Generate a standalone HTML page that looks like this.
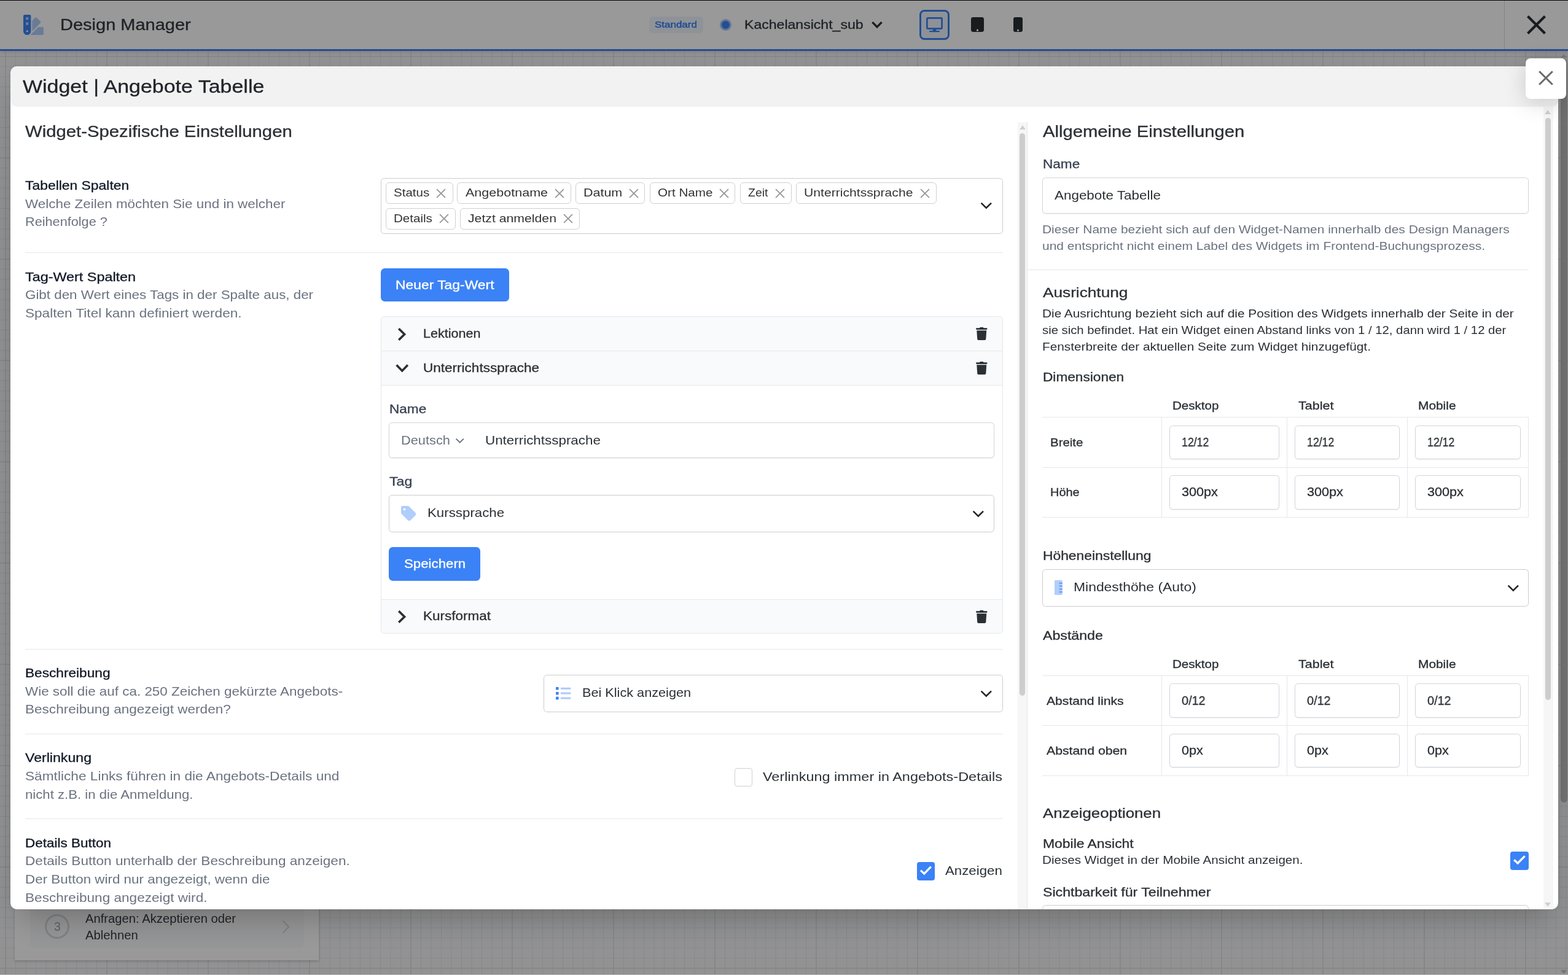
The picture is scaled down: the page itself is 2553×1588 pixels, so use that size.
<!DOCTYPE html>
<html lang="de">
<head>
<meta charset="utf-8">
<title>Design Manager – Widget | Angebote Tabelle</title>
<style>
*{box-sizing:border-box;margin:0;padding:0}
html,body{width:2553px;height:1588px;overflow:hidden}
.t,h1,h2,h3,h4{will-change:transform}
body{position:relative;font-family:"Liberation Sans",Arial,sans-serif;font-weight:400;color:#212529;
 background-color:#f3f4f6;
 background-image:
  linear-gradient(to right,#d6d7d9 0,#d6d7d9 1.3px,transparent 1.3px),
  linear-gradient(to bottom,#d6d7d9 0,#d6d7d9 1.3px,transparent 1.3px),
  linear-gradient(to right,#e3e4e6 0,#e3e4e6 1.3px,transparent 1.3px),
  linear-gradient(to bottom,#e3e4e6 0,#e3e4e6 1.3px,transparent 1.3px);
 background-size:165px 165px,165px 165px,16.5px 16.5px,16.5px 16.5px;
 background-position:8.5px 91.6px,8.5px 91.6px,8.5px 91.6px,8.5px 91.6px}
.t{position:absolute;white-space:nowrap;line-height:1;transform-origin:0 50%;font-weight:400;display:block}
.t.m{-webkit-text-stroke:.32px currentColor}
.t.b{font-weight:700}
.t.sb{-webkit-text-stroke:.5px currentColor}
.ic{position:absolute;display:block;overflow:visible}
div,section,header,i{display:block}
header.topbar{position:absolute;left:0;top:0;width:2553px;height:83px;background:#fff;border-top:1px solid #000;border-bottom:3px solid #3b82f6;box-shadow:0 2px 7px rgba(0,0,0,.13)}
header.topbar>*{margin-top:-1px}
header.topbar>div{position:absolute}
.badge{background:#eff6fd;border-radius:5px}
.dot{border-radius:50%;background:#3b82f6;border:3px solid #a9c6f5}
.devbtn{border:3px solid #3b82f6;border-radius:8px;background:#edf4fc}
.vdiv{background:#d7dde5}
.stepcard{position:absolute;left:24px;top:1380px;width:495px;height:184px;background:#fff;box-shadow:0 2px 4px rgba(0,0,0,.18)}
.stepcard>*{margin-left:-24px;margin-top:-1380px}
.stepcard>div{position:absolute}
.stepinner{background:#f9fafb;border-radius:8px}
.stepnum{border:3px solid #d5d9de;border-radius:50%}
.pgscroll{position:absolute}
.pgscroll i{position:absolute;left:4px;width:10.600px}
.pgscroll .thumb{top:13px;height:1211px;border-radius:6px;background:#c1c1c1}
.pgscroll .up{top:5px;left:4px;width:0;height:0;border:5px solid transparent;border-top:0;border-bottom:6px solid #c8c8c8}
.pgscroll .down{bottom:2px;left:3.500px;width:0;height:0;border:5px solid transparent;border-bottom:0;border-top:6px solid #c1c1c1}
.overlay{position:absolute;left:0;top:1px;width:2553px;height:1587px;background:rgba(0,0,0,.4)}
.modal{position:absolute;left:17px;top:108px;width:2520px;height:1373px;background:#fff;border-radius:10.500px;box-shadow:0 25px 50px -12px rgba(0,0,0,.25),0 0 9px rgba(0,0,0,.07)}
.modal>.clip{position:absolute;left:0;top:0;width:2520px;height:1373px;border-radius:10.500px;overflow:hidden}
.modal header{position:absolute;left:0;top:0;width:2520px;height:65.500px;background:#f2f2f2;border-radius:10.500px}
.modal section{position:absolute;left:0;top:0;width:0;height:0}
.modal section>div{position:absolute}
.field{border:1px solid #d1d5db;border-radius:5.500px;background:#fff}
.field.sh{box-shadow:0 1px 2px rgba(0,0,0,.06)}
.chip{border:1px solid #d0d0d0;border-radius:6px;background:#fff}
.field.ms{border-color:#ccc}
.hr{background:#e5e7eb}
.btn{background:#3b82f6;border-radius:6.500px}
.acc{border:1px solid #e5e7eb;border-radius:5.500px;background:#fff}
.acch{background:#f9fafb}
.cb{border:1px solid #d0d0d0;border-radius:4px;background:#fff}
.cb.on{border:0;background:#3b82f6}
.cb svg{display:block;width:100%;height:100%}
.sbtrack{background:#f6f6f6}
.sbtrack i{position:absolute;left:3px;width:9px}
.sbtrack .thumb{border-radius:5px;background:#cdcdcd}
.sbtrack .up{top:5px;left:2.500px;width:0;height:0;border:5px solid transparent;border-top:0;border-bottom:7px solid #cfcfcf}
.sbtrack .down{bottom:4px;left:2.500px;width:0;height:0;border:5px solid transparent;border-bottom:0;border-top:7px solid #cfcfcf}
.closebtn{position:absolute;left:2484px;top:95px;width:66px;height:66px;background:#fff;border-radius:8px;box-shadow:0 6px 36px rgba(0,0,0,.17)}
.closebtn svg{position:absolute;left:20px;top:18.500px;width:26px;height:26px}
.edge{position:absolute;left:0;top:1586.600px;width:2553px;height:2px;background:#b4b4b4}
</style>
</head>
<body>
<header class="topbar">
<svg class="ic" style="left:38.0px;top:24.0px;width:33.0px;height:33.0px" viewBox="0 0 512 512" aria-hidden="true"><path fill="#3b82f6" fill-rule="evenodd" d="M0 32C0 14 14 0 32 0H160c18 0 32 14 32 32V416c0 53-43 96-96 96S0 469 0 416ZM64 64v64h64V64ZM64 192v64h64V192ZM96 440a24 24 0 1 0 0-48a24 24 0 1 0 0 48Z"/><path fill="#3b82f6" opacity=".4" d="M64 64h64v64H64ZM64 192h64v64H64Z"/><path fill="#3b82f6" opacity=".4" d="M224 148L296 76c12-12 32-12 45 0l90 90c12 12 12 32 0 45L224 418Z"/><path fill="#3b82f6" opacity=".4" d="M176 512L378 310H480c18 0 32 14 32 32V480c0 18-14 32-32 32Z"/></svg>
<h1 class="t m" style="left:98px;top:28px;font-size:25.15px;transform:scaleX(1.1533);color:#343a40">Design Manager</h1>
<div class="badge" style="left:1057.0px;top:27.0px;width:88.0px;height:27.0px"></div>
<span class="t m sb" style="left:1066px;top:32px;font-size:15.05px;transform:scaleX(1.1276);color:#3b82f6">Standard</span>
<div class="dot" style="left:1172.0px;top:30.8px;width:19.0px;height:19.0px"></div>
<span class="t m" style="left:1212px;top:30px;font-size:20.05px;transform:scaleX(1.1514);color:#343a40">Kachelansicht_sub</span>
<svg class="ic" style="left:1417.6px;top:32.3px;width:20.0px;height:16.0px" viewBox="0 0 20 16" aria-hidden="true"><path d="M2.4 4.2L10 11.800L17.6 4.2" fill="none" stroke="#2b3035" stroke-width="3.3"/></svg>
<div class="devbtn" role="button" style="left:1497.3px;top:16.4px;width:48.3px;height:48.4px"></div>
<svg class="ic" style="left:1508.0px;top:28.0px;width:27.0px;height:24.2px" viewBox="0 0 27 24.2" aria-hidden="true"><path fill="#3b82f6" fill-rule="evenodd" d="M3 0H24a3 3 0 0 1 3 3V17a3 3 0 0 1-3 3H3a3 3 0 0 1-3-3V3a3 3 0 0 1 3-3ZM2.7 2.7V17.3H24.3V2.7Z"/><path fill="#3b82f6" d="M11.6 19.5h3.800l1.400 2.500H21a1.100 1.100 0 0 1 0 2.200H6a1.100 1.100 0 0 1 0-2.200h4.200Z"/></svg>
<svg class="ic" style="left:1581.0px;top:28.0px;width:21.0px;height:24.0px" viewBox="0 0 21 24" aria-hidden="true"><path fill="#2b3035" fill-rule="evenodd" d="M3.4 0H17.6a3.4 3.4 0 0 1 3.4 3.4V20.6a3.4 3.4 0 0 1-3.4 3.4H3.4a3.4 3.4 0 0 1-3.400-3.400V3.4a3.4 3.4 0 0 1 3.400-3.400ZM10.5 23a1.700 1.700 0 1 0 0-3.400a1.700 1.700 0 1 0 0 3.400Z"/></svg>
<svg class="ic" style="left:1650.0px;top:28.0px;width:15.0px;height:24.0px" viewBox="0 0 15 24" aria-hidden="true"><path fill="#2b3035" fill-rule="evenodd" d="M3.2 0H11.8a3.200 3.200 0 0 1 3.200 3.200V20.8a3.200 3.200 0 0 1-3.200 3.200H3.2a3.200 3.200 0 0 1-3.200-3.200V3.2a3.200 3.200 0 0 1 3.200-3.200ZM7.5 23a1.600 1.600 0 1 0 0-3.200a1.600 1.600 0 1 0 0 3.200Z"/></svg>
<div class="vdiv" style="left:2449.0px;top:1.0px;width:1.0px;height:79.0px"></div>
<svg class="ic" style="left:2483.7px;top:23.4px;width:35.0px;height:35.0px" viewBox="0 0 35 35" aria-hidden="true"><path d="M3.5 3.5L31.5 31.5M31.5 3.5L3.5 31.5" fill="none" stroke="#2b3035" stroke-width="4.2"/></svg>
</header>
<section class="stepcard">
<div class="stepinner" style="left:49.0px;top:1400.0px;width:446.0px;height:144.4px"></div>
<div class="stepnum" style="left:73.4px;top:1488.8px;width:40.0px;height:40.0px"></div>
<span class="t" style="left:88px;top:1500px;font-size:19.5px;transform:scaleX(0.9979);color:#9ca3af">3</span>
<span class="t" style="left:139px;top:1487px;font-size:19.3px;transform:scaleX(1.0487);color:#343a40">Anfragen: Akzeptieren oder</span>
<span class="t" style="left:139px;top:1514px;font-size:19.3px;transform:scaleX(1.0522);color:#343a40">Ablehnen</span>
<svg class="ic" style="left:458.0px;top:1497.5px;width:14.0px;height:23.0px" viewBox="0 0 14 23" aria-hidden="true"><path d="M2.5 1.5L12 11.500L2.5 21.500" fill="none" stroke="#cbd0d6" stroke-width="1.7"/></svg>
</section>
<div class="pgscroll" role="scrollbar" style="left:2537.0px;top:83.0px;width:16.0px;height:1505.0px"><i class="up"></i><i class="thumb"></i><i class="down"></i></div>
<div class="overlay"></div>
<div class="modal" role="dialog" aria-label="Widget | Angebote Tabelle"><div class="clip">
<header><h2 class="t m" style="left:20px;top:18px;font-size:29.85px;transform:scaleX(1.1379);color:#212529">Widget | Angebote Tabelle</h2></header>
<section class="leftpane">
<h3 class="t m" style="left:24px;top:94px;font-size:25.85px;transform:scaleX(1.1334);color:#2b3035">Widget-Spezifische Einstellungen</h3>
<span class="t m" style="left:24px;top:184px;font-size:20.05px;transform:scaleX(1.1425);color:#111827">Tabellen Spalten</span>
<span class="t" style="left:24px;top:214px;font-size:20.6px;transform:scaleX(1.0889);color:#6b7280">Welche Zeilen möchten Sie und in welcher</span>
<span class="t" style="left:24px;top:243px;font-size:20.6px;transform:scaleX(1.0527);color:#6b7280">Reihenfolge ?</span>
<div class="field ms" role="combobox" style="left:603.0px;top:182.0px;width:1013.0px;height:91.0px"></div>
<div class="chip" role="option" style="left:611.3px;top:189.0px;width:109.3px;height:35.0px"></div><span class="t" style="left:624px;top:196px;font-size:19.2px;transform:scaleX(1.0711);color:#333">Status</span><svg class="ic" style="left:693.0px;top:198.5px;width:16.0px;height:16.0px" viewBox="0 0 16 16" aria-hidden="true"><path d="M1.6 1.6L14.4 14.4M14.4 1.6L1.6 14.4" fill="none" stroke="#999" stroke-width="1.9" stroke-linecap="round"/></svg>
<div class="chip" role="option" style="left:727.2px;top:189.0px;width:185.4px;height:35.0px"></div><span class="t" style="left:741px;top:196px;font-size:19.2px;transform:scaleX(1.1220);color:#333">Angebotname</span><svg class="ic" style="left:885.8px;top:198.5px;width:16.0px;height:16.0px" viewBox="0 0 16 16" aria-hidden="true"><path d="M1.6 1.6L14.4 14.4M14.4 1.6L1.6 14.4" fill="none" stroke="#999" stroke-width="1.9" stroke-linecap="round"/></svg>
<div class="chip" role="option" style="left:920.3px;top:189.0px;width:113.2px;height:35.0px"></div><span class="t" style="left:933px;top:196px;font-size:19.2px;transform:scaleX(1.1195);color:#333">Datum</span><svg class="ic" style="left:1007.0px;top:198.5px;width:16.0px;height:16.0px" viewBox="0 0 16 16" aria-hidden="true"><path d="M1.6 1.6L14.4 14.4M14.4 1.6L1.6 14.4" fill="none" stroke="#999" stroke-width="1.9" stroke-linecap="round"/></svg>
<div class="chip" role="option" style="left:1041.2px;top:189.0px;width:139.2px;height:35.0px"></div><span class="t" style="left:1054px;top:196px;font-size:19.2px;transform:scaleX(1.0753);color:#333">Ort Name</span><svg class="ic" style="left:1153.8px;top:198.5px;width:16.0px;height:16.0px" viewBox="0 0 16 16" aria-hidden="true"><path d="M1.6 1.6L14.4 14.4M14.4 1.6L1.6 14.4" fill="none" stroke="#999" stroke-width="1.9" stroke-linecap="round"/></svg>
<div class="chip" role="option" style="left:1188.3px;top:189.0px;width:83.3px;height:35.0px"></div><span class="t" style="left:1201px;top:196px;font-size:19.2px;transform:scaleX(1.0135);color:#333">Zeit</span><svg class="ic" style="left:1245.0px;top:198.5px;width:16.0px;height:16.0px" viewBox="0 0 16 16" aria-hidden="true"><path d="M1.6 1.6L14.4 14.4M14.4 1.6L1.6 14.4" fill="none" stroke="#999" stroke-width="1.9" stroke-linecap="round"/></svg>
<div class="chip" role="option" style="left:1279.3px;top:189.0px;width:228.3px;height:35.0px"></div><span class="t" style="left:1292px;top:196px;font-size:19.2px;transform:scaleX(1.1019);color:#333">Unterrichtssprache</span><svg class="ic" style="left:1481.0px;top:198.5px;width:16.0px;height:16.0px" viewBox="0 0 16 16" aria-hidden="true"><path d="M1.6 1.6L14.4 14.4M14.4 1.6L1.6 14.4" fill="none" stroke="#999" stroke-width="1.9" stroke-linecap="round"/></svg>
<div class="chip" role="option" style="left:611.3px;top:231.0px;width:114.1px;height:35.0px"></div><span class="t" style="left:624px;top:238px;font-size:19.2px;transform:scaleX(1.0706);color:#333">Details</span><svg class="ic" style="left:698.0px;top:239.5px;width:16.0px;height:16.0px" viewBox="0 0 16 16" aria-hidden="true"><path d="M1.6 1.6L14.4 14.4M14.4 1.6L1.6 14.4" fill="none" stroke="#999" stroke-width="1.9" stroke-linecap="round"/></svg>
<div class="chip" role="option" style="left:732.2px;top:231.0px;width:194.5px;height:35.0px"></div><span class="t" style="left:745px;top:238px;font-size:19.2px;transform:scaleX(1.1062);color:#333">Jetzt anmelden</span><svg class="ic" style="left:899.9px;top:239.5px;width:16.0px;height:16.0px" viewBox="0 0 16 16" aria-hidden="true"><path d="M1.6 1.6L14.4 14.4M14.4 1.6L1.6 14.4" fill="none" stroke="#999" stroke-width="1.9" stroke-linecap="round"/></svg>
<svg class="ic" style="left:1578.2px;top:220.3px;width:21.6px;height:13.4px" viewBox="0 0 21.6 13.4" aria-hidden="true"><path d="M2.6 2.6L10.8 10.6L19.0 2.6" fill="none" stroke="#212529" stroke-width="2.6"/></svg>
<div class="hr" role="separator" style="left:24.0px;top:303.0px;width:1592.0px;height:1.0px"></div>
<span class="t m" style="left:24px;top:333px;font-size:20.05px;transform:scaleX(1.1663);color:#111827">Tag-Wert Spalten</span>
<span class="t" style="left:24px;top:362px;font-size:20.6px;transform:scaleX(1.0859);color:#6b7280">Gibt den Wert eines Tags in der Spalte aus, der</span>
<span class="t" style="left:24px;top:392px;font-size:20.6px;transform:scaleX(1.0958);color:#6b7280">Spalten Titel kann definiert werden.</span>
<div class="btn" role="button" style="left:603.0px;top:329.0px;width:209.0px;height:54.0px"></div>
<span class="t m" style="left:627px;top:346px;font-size:20.05px;transform:scaleX(1.1410);color:#fff">Neuer Tag-Wert</span>
<div class="acc" style="left:603.0px;top:407.0px;width:1013.0px;height:517.0px"></div>
<div class="acch" style="left:604.0px;top:408.0px;width:1011.0px;height:55.0px;border-radius:4.500px 4.500px 0 0"></div>
<div class="hr" role="separator" style="left:604.0px;top:463.0px;width:1011.0px;height:1.0px"></div>
<div class="acch" style="left:604.0px;top:464.0px;width:1011.0px;height:55.0px"></div>
<div class="hr" role="separator" style="left:604.0px;top:519.0px;width:1011.0px;height:1.0px"></div>
<div class="hr" role="separator" style="left:604.0px;top:868.0px;width:1011.0px;height:1.0px"></div>
<div class="acch" style="left:604.0px;top:869.0px;width:1011.0px;height:54.0px;border-radius:0 0 4.500px 4.500px"></div>
<svg class="ic" style="left:628.8px;top:423.9px;width:16.0px;height:25.0px" viewBox="0 0 16 25" aria-hidden="true"><path d="M3.2 3.2L12.6 12.5L3.2 21.8" fill="none" stroke="#2b3035" stroke-width="3.6"/></svg>
<span class="t m" style="left:672px;top:425px;font-size:20.05px;transform:scaleX(1.0746);color:#2b3035">Lektionen</span>
<svg class="ic" style="left:1571.8px;top:425.1px;width:18.5px;height:21.0px" viewBox="0 0 18.5 21" aria-hidden="true"><path fill="#2b3035" d="M6.2 0.7A1.3 1.3 0 0 1 7.4 0h3.7a1.3 1.3 0 0 1 1.2.7L12.6 1.3H17.2a1.3 1.3 0 0 1 0 2.6H1.3a1.3 1.3 0 0 1 0-2.6H5.9ZM1.3 5.3H17.2L16.3 19.2a2 2 0 0 1-2 1.8H4.2a2 2 0 0 1-2-1.8Z"/></svg>
<svg class="ic" style="left:625.9px;top:483.8px;width:23.5px;height:14.8px" viewBox="0 0 23.5 14.8" aria-hidden="true"><path d="M2.6 2.6L11.75 12.0L20.9 2.6" fill="none" stroke="#2b3035" stroke-width="3.6"/></svg>
<span class="t m" style="left:672px;top:481px;font-size:20.05px;transform:scaleX(1.1247);color:#2b3035">Unterrichtssprache</span>
<svg class="ic" style="left:1571.8px;top:481.1px;width:18.5px;height:21.0px" viewBox="0 0 18.5 21" aria-hidden="true"><path fill="#2b3035" d="M6.2 0.7A1.3 1.3 0 0 1 7.4 0h3.7a1.3 1.3 0 0 1 1.2.7L12.6 1.3H17.2a1.3 1.3 0 0 1 0 2.6H1.3a1.3 1.3 0 0 1 0-2.6H5.9ZM1.3 5.3H17.2L16.3 19.2a2 2 0 0 1-2 1.8H4.2a2 2 0 0 1-2-1.8Z"/></svg>
<svg class="ic" style="left:628.8px;top:883.7px;width:16.0px;height:25.0px" viewBox="0 0 16 25" aria-hidden="true"><path d="M3.2 3.2L12.6 12.5L3.2 21.8" fill="none" stroke="#2b3035" stroke-width="3.6"/></svg>
<span class="t m" style="left:672px;top:885px;font-size:20.05px;transform:scaleX(1.1230);color:#2b3035">Kursformat</span>
<svg class="ic" style="left:1571.8px;top:885.5px;width:18.5px;height:21.0px" viewBox="0 0 18.5 21" aria-hidden="true"><path fill="#2b3035" d="M6.2 0.7A1.3 1.3 0 0 1 7.4 0h3.7a1.3 1.3 0 0 1 1.2.7L12.6 1.3H17.2a1.3 1.3 0 0 1 0 2.6H1.3a1.3 1.3 0 0 1 0-2.6H5.9ZM1.3 5.3H17.2L16.3 19.2a2 2 0 0 1-2 1.8H4.2a2 2 0 0 1-2-1.8Z"/></svg>
<span class="t m" style="left:617px;top:548px;font-size:20.05px;transform:scaleX(1.1264);color:#374151">Name</span>
<div class="field sh" role="textbox" style="left:616.0px;top:580.0px;width:986.0px;height:58.0px"></div>
<span class="t" style="left:636px;top:599px;font-size:20.6px;transform:scaleX(1.0582);color:#6b7280">Deutsch</span>
<svg class="ic" style="left:723.2px;top:603.6px;width:17.5px;height:11.5px" viewBox="0 0 17.5 11.5" aria-hidden="true"><path d="M2.6 2.6L8.75 8.7L14.9 2.6" fill="none" stroke="#6b7280" stroke-width="2"/></svg>
<span class="t" style="left:773px;top:599px;font-size:20.6px;transform:scaleX(1.0872);color:#2b3035">Unterrichtssprache</span>
<span class="t m" style="left:617px;top:666px;font-size:20.05px;transform:scaleX(1.1555);color:#374151">Tag</span>
<div class="field ms" role="combobox" style="left:616.0px;top:698.0px;width:986.0px;height:61.0px"></div>
<svg class="ic" style="left:636.0px;top:715.7px;width:24.2px;height:24.3px" viewBox="0 0 24.2 24.3" aria-hidden="true"><path fill="#3b82f6" opacity=".4" fill-rule="evenodd" d="M0 2.4A2.4 2.4 0 0 1 2.4 0h8.5c.9 0 1.7.3 2.3 1l10 10c1.3 1.3 1.3 3.3 0 4.6l-7.6 7.6c-1.3 1.3-3.3 1.3-4.6 0L1 13.200C.3 12.600 0 11.800 0 10.900ZM5.6 7.500a1.9 1.9 0 1 0 0-3.800a1.9 1.9 0 1 0 0 3.800Z"/></svg>
<span class="t" style="left:679px;top:717px;font-size:20.6px;transform:scaleX(1.0824);color:#2b3035">Kurssprache</span>
<svg class="ic" style="left:1565.1px;top:721.5px;width:21.6px;height:13.4px" viewBox="0 0 21.6 13.4" aria-hidden="true"><path d="M2.6 2.6L10.8 10.6L19.0 2.6" fill="none" stroke="#212529" stroke-width="2.6"/></svg>
<div class="btn" role="button" style="left:616.0px;top:783.0px;width:149.0px;height:55.0px"></div>
<span class="t m" style="left:641px;top:800px;font-size:20.05px;transform:scaleX(1.1104);color:#fff">Speichern</span>
<div class="hr" role="separator" style="left:24.0px;top:949.0px;width:1592.0px;height:1.0px"></div>
<span class="t m" style="left:24px;top:978px;font-size:20.05px;transform:scaleX(1.1305);color:#111827">Beschreibung</span>
<span class="t" style="left:24px;top:1008px;font-size:20.6px;transform:scaleX(1.0887);color:#6b7280">Wie soll die auf ca. 250 Zeichen gekürzte Angebots-</span>
<span class="t" style="left:24px;top:1037px;font-size:20.6px;transform:scaleX(1.0951);color:#6b7280">Beschreibung angezeigt werden?</span>
<div class="field ms" role="combobox" style="left:868.0px;top:991.0px;width:748.0px;height:61.0px"></div>
<svg class="ic" style="left:887.5px;top:1010.7px;width:24.5px;height:20.4px" viewBox="0 0 24.5 20.4" aria-hidden="true"><g fill="#3b82f6"><rect x="0" y="0" width="4.6" height="4.6" rx=".6"/><rect x="0" y="7.9" width="4.6" height="4.6" rx=".6"/><rect x="0" y="15.8" width="4.6" height="4.6" rx=".6"/></g><g fill="#3b82f6" opacity=".4"><rect x="7.8" y=".7" width="16.7" height="3.2" rx="1.2"/><rect x="7.8" y="8.600" width="16.7" height="3.2" rx="1.2"/><rect x="7.8" y="16.500" width="16.7" height="3.2" rx="1.2"/></g></svg>
<span class="t" style="left:931px;top:1010px;font-size:20.6px;transform:scaleX(1.0523);color:#2b3035">Bei Klick anzeigen</span>
<svg class="ic" style="left:1578.0px;top:1014.8px;width:21.6px;height:13.4px" viewBox="0 0 21.6 13.4" aria-hidden="true"><path d="M2.6 2.6L10.8 10.6L19.0 2.6" fill="none" stroke="#212529" stroke-width="2.6"/></svg>
<div class="hr" role="separator" style="left:24.0px;top:1086.5px;width:1592.0px;height:1.0px"></div>
<span class="t m" style="left:24px;top:1116px;font-size:20.05px;transform:scaleX(1.1545);color:#111827">Verlinkung</span>
<span class="t" style="left:24px;top:1146px;font-size:20.6px;transform:scaleX(1.1004);color:#6b7280">Sämtliche Links führen in die Angebots-Details und</span>
<span class="t" style="left:24px;top:1176px;font-size:20.6px;transform:scaleX(1.0759);color:#6b7280">nicht z.B. in die Anmeldung.</span>
<div class="cb" role="checkbox" aria-checked="false" style="left:1179.0px;top:1143.0px;width:29.0px;height:30.0px"></div>
<span class="t" style="left:1225px;top:1147px;font-size:20.6px;transform:scaleX(1.1391);color:#2b3035">Verlinkung immer in Angebots-Details</span>
<div class="hr" role="separator" style="left:24.0px;top:1225.0px;width:1592.0px;height:1.0px"></div>
<span class="t m" style="left:24px;top:1255px;font-size:20.05px;transform:scaleX(1.1233);color:#111827">Details Button</span>
<span class="t" style="left:24px;top:1284px;font-size:20.6px;transform:scaleX(1.0970);color:#6b7280">Details Button unterhalb der Beschreibung anzeigen.</span>
<span class="t" style="left:24px;top:1314px;font-size:20.6px;transform:scaleX(1.0879);color:#6b7280">Der Button wird nur angezeigt, wenn die</span>
<span class="t" style="left:24px;top:1344px;font-size:20.6px;transform:scaleX(1.0974);color:#6b7280">Beschreibung angezeigt wird.</span>
<div class="cb on" role="checkbox" aria-checked="true" style="left:1476.0px;top:1296.0px;width:29.0px;height:30.0px"><svg viewBox="0 0 30 30" aria-hidden="true"><path d="M6.2 13.6L12.2 19L23.6 7.4" fill="none" stroke="#fff" stroke-width="3.4"/></svg></div>
<span class="t" style="left:1522px;top:1300px;font-size:20.6px;transform:scaleX(1.0803);color:#2b3035">Anzeigen</span>
<div class="sbtrack" role="scrollbar" style="left:1640.0px;top:91.0px;width:15.0px;height:1282.0px"><i class="up"></i><i class="thumb" style="top:18px;height:916px"></i></div>
</section>
<section class="rightpane">
<div class="hr" role="separator" style="left:1655.0px;top:91.0px;width:1.0px;height:1282.0px"></div>
<h3 class="t m" style="left:1681px;top:94px;font-size:25.85px;transform:scaleX(1.1309);color:#2b3035">Allgemeine Einstellungen</h3>
<span class="t m" style="left:1681px;top:149px;font-size:20.05px;transform:scaleX(1.1264);color:#374151">Name</span>
<div class="field sh" role="textbox" style="left:1680.0px;top:181.0px;width:792.0px;height:59.0px"></div>
<span class="t" style="left:1700px;top:200px;font-size:20.6px;transform:scaleX(1.0886);color:#2b3035">Angebote Tabelle</span>
<span class="t" style="left:1680px;top:256px;font-size:19.2px;transform:scaleX(1.0905);color:#6b7280">Dieser Name bezieht sich auf den Widget-Namen innerhalb des Design Managers</span>
<span class="t" style="left:1680px;top:283px;font-size:19.2px;transform:scaleX(1.0940);color:#6b7280">und entspricht nicht einem Label des Widgets im Frontend-Buchungsprozess.</span>
<div class="hr" role="separator" style="left:1655.0px;top:331.0px;width:817.0px;height:1.0px"></div>
<h4 class="t m" style="left:1681px;top:358px;font-size:21.65px;transform:scaleX(1.2107);color:#2b3035">Ausrichtung</h4>
<span class="t" style="left:1680px;top:393px;font-size:19.2px;transform:scaleX(1.0841);color:#2b3035">Die Ausrichtung bezieht sich auf die Position des Widgets innerhalb der Seite in der</span>
<span class="t" style="left:1680px;top:420px;font-size:19.2px;transform:scaleX(1.0570);color:#2b3035">sie sich befindet. Hat ein Widget einen Abstand links von 1 / 12, dann wird 1 / 12 der</span>
<span class="t" style="left:1680px;top:447px;font-size:19.2px;transform:scaleX(1.0832);color:#2b3035">Fensterbreite der aktuellen Seite zum Widget hinzugefügt.</span>
<span class="t m" style="left:1681px;top:496px;font-size:20.05px;transform:scaleX(1.1308);color:#2b3035">Dimensionen</span>
<span class="t m" style="left:1892px;top:544px;font-size:18.65px;transform:scaleX(1.1031);color:#2b3035">Desktop</span>
<span class="t m" style="left:2097px;top:544px;font-size:18.65px;transform:scaleX(1.1547);color:#2b3035">Tablet</span>
<span class="t m" style="left:2292px;top:544px;font-size:18.65px;transform:scaleX(1.1197);color:#2b3035">Mobile</span>
<div class="hr" role="separator" style="left:1680.0px;top:571.0px;width:792.0px;height:1.0px"></div>
<div class="hr" role="separator" style="left:1680.0px;top:653.0px;width:792.0px;height:1.0px"></div>
<div class="hr" role="separator" style="left:1680.0px;top:734.0px;width:792.0px;height:1.0px"></div>
<div class="hr" role="separator" style="left:1874.0px;top:571.0px;width:1.0px;height:164.0px"></div>
<div class="hr" role="separator" style="left:2078.0px;top:571.0px;width:1.0px;height:164.0px"></div>
<div class="hr" role="separator" style="left:2274.0px;top:571.0px;width:1.0px;height:164.0px"></div>
<div class="hr" role="separator" style="left:2471.0px;top:571.0px;width:1.0px;height:164.0px"></div>
<span class="t m" style="left:1693px;top:604px;font-size:18.65px;transform:scaleX(1.0970);color:#2b3035">Breite</span>
<span class="t m" style="left:1693px;top:685px;font-size:18.65px;transform:scaleX(1.0679);color:#2b3035">Höhe</span>
<div class="field sh" role="textbox" style="left:1887.0px;top:585.0px;width:179.0px;height:55.0px"></div>
<span class="t m" style="left:1907px;top:602px;font-size:20.05px;transform:scaleX(0.8840);color:#2b3035">12/12</span>
<div class="field sh" role="textbox" style="left:2091.0px;top:585.0px;width:171.0px;height:55.0px"></div>
<span class="t m" style="left:2111px;top:602px;font-size:20.05px;transform:scaleX(0.8840);color:#2b3035">12/12</span>
<div class="field sh" role="textbox" style="left:2287.0px;top:585.0px;width:172.0px;height:55.0px"></div>
<span class="t m" style="left:2307px;top:602px;font-size:20.05px;transform:scaleX(0.8840);color:#2b3035">12/12</span>
<div class="field sh" role="textbox" style="left:1887.0px;top:666.0px;width:179.0px;height:56.0px"></div>
<span class="t m" style="left:1907px;top:683px;font-size:20.05px;transform:scaleX(1.0799);color:#2b3035">300px</span>
<div class="field sh" role="textbox" style="left:2091.0px;top:666.0px;width:171.0px;height:56.0px"></div>
<span class="t m" style="left:2111px;top:683px;font-size:20.05px;transform:scaleX(1.0799);color:#2b3035">300px</span>
<div class="field sh" role="textbox" style="left:2287.0px;top:666.0px;width:172.0px;height:56.0px"></div>
<span class="t m" style="left:2307px;top:683px;font-size:20.05px;transform:scaleX(1.0799);color:#2b3035">300px</span>
<span class="t m" style="left:1681px;top:787px;font-size:20.05px;transform:scaleX(1.1395);color:#2b3035">Höheneinstellung</span>
<div class="field ms" role="combobox" style="left:1680.0px;top:819.0px;width:792.0px;height:61.0px"></div>
<svg class="ic" style="left:1699.7px;top:837.3px;width:12.7px;height:24.0px" viewBox="0 0 12.7 24" aria-hidden="true"><rect x="0" y="0" width="12.7" height="24" rx="1.6" fill="#3b82f6" opacity=".4"/><path d="M7.6 4.8h5.1M7.6 9.6h5.1M7.6 14.4h5.1M7.6 19.2h5.1" stroke="#3b82f6" stroke-width="1.5" opacity=".85"/></svg>
<span class="t" style="left:1731px;top:838px;font-size:20.6px;transform:scaleX(1.1116);color:#2b3035">Mindesthöhe (Auto)</span>
<svg class="ic" style="left:2435.5px;top:842.7px;width:21.6px;height:13.4px" viewBox="0 0 21.6 13.4" aria-hidden="true"><path d="M2.6 2.6L10.8 10.6L19.0 2.6" fill="none" stroke="#212529" stroke-width="2.6"/></svg>
<span class="t m" style="left:1681px;top:917px;font-size:20.05px;transform:scaleX(1.1557);color:#2b3035">Abstände</span>
<span class="t m" style="left:1892px;top:965px;font-size:18.65px;transform:scaleX(1.1031);color:#2b3035">Desktop</span>
<span class="t m" style="left:2097px;top:965px;font-size:18.65px;transform:scaleX(1.1547);color:#2b3035">Tablet</span>
<span class="t m" style="left:2292px;top:965px;font-size:18.65px;transform:scaleX(1.1197);color:#2b3035">Mobile</span>
<div class="hr" role="separator" style="left:1680.0px;top:992.0px;width:792.0px;height:1.0px"></div>
<div class="hr" role="separator" style="left:1680.0px;top:1073.0px;width:792.0px;height:1.0px"></div>
<div class="hr" role="separator" style="left:1680.0px;top:1155.0px;width:792.0px;height:1.0px"></div>
<div class="hr" role="separator" style="left:1874.0px;top:992.0px;width:1.0px;height:164.0px"></div>
<div class="hr" role="separator" style="left:2078.0px;top:992.0px;width:1.0px;height:164.0px"></div>
<div class="hr" role="separator" style="left:2274.0px;top:992.0px;width:1.0px;height:164.0px"></div>
<div class="hr" role="separator" style="left:2471.0px;top:992.0px;width:1.0px;height:164.0px"></div>
<span class="t m" style="left:1687px;top:1025px;font-size:18.65px;transform:scaleX(1.1328);color:#2b3035">Abstand links</span>
<span class="t m" style="left:1687px;top:1106px;font-size:18.65px;transform:scaleX(1.1402);color:#2b3035">Abstand oben</span>
<div class="field sh" role="textbox" style="left:1887.0px;top:1005.0px;width:179.0px;height:56.0px"></div>
<span class="t m" style="left:1907px;top:1023px;font-size:20.05px;transform:scaleX(0.9898);color:#2b3035">0/12</span>
<div class="field sh" role="textbox" style="left:2091.0px;top:1005.0px;width:171.0px;height:56.0px"></div>
<span class="t m" style="left:2111px;top:1023px;font-size:20.05px;transform:scaleX(0.9898);color:#2b3035">0/12</span>
<div class="field sh" role="textbox" style="left:2287.0px;top:1005.0px;width:172.0px;height:56.0px"></div>
<span class="t m" style="left:2307px;top:1023px;font-size:20.05px;transform:scaleX(0.9898);color:#2b3035">0/12</span>
<div class="field sh" role="textbox" style="left:1887.0px;top:1087.0px;width:179.0px;height:55.0px"></div>
<span class="t m" style="left:1907px;top:1104px;font-size:20.05px;transform:scaleX(1.0750);color:#2b3035">0px</span>
<div class="field sh" role="textbox" style="left:2091.0px;top:1087.0px;width:171.0px;height:55.0px"></div>
<span class="t m" style="left:2111px;top:1104px;font-size:20.05px;transform:scaleX(1.0750);color:#2b3035">0px</span>
<div class="field sh" role="textbox" style="left:2287.0px;top:1087.0px;width:172.0px;height:55.0px"></div>
<span class="t m" style="left:2307px;top:1104px;font-size:20.05px;transform:scaleX(1.0750);color:#2b3035">0px</span>
<h4 class="t m" style="left:1681px;top:1206px;font-size:21.65px;transform:scaleX(1.1910);color:#2b3035">Anzeigeoptionen</h4>
<span class="t m" style="left:1681px;top:1256px;font-size:20.05px;transform:scaleX(1.1437);color:#2b3035">Mobile Ansicht</span>
<span class="t" style="left:1680px;top:1283px;font-size:19.2px;transform:scaleX(1.0759);color:#2b3035">Dieses Widget in der Mobile Ansicht anzeigen.</span>
<div class="cb on" role="checkbox" aria-checked="true" style="left:2442.0px;top:1279.0px;width:30.0px;height:30.0px"><svg viewBox="0 0 30 30" aria-hidden="true"><path d="M6.2 13.6L12.2 19L23.6 7.4" fill="none" stroke="#fff" stroke-width="3.4"/></svg></div>
<span class="t m" style="left:1681px;top:1335px;font-size:20.05px;transform:scaleX(1.1545);color:#2b3035">Sichtbarkeit für Teilnehmer</span>
<div class="field ms" role="combobox" style="left:1680.0px;top:1366.0px;width:792.0px;height:60.0px"></div>
<div class="sbtrack r" role="scrollbar" style="left:2495.5px;top:65.5px;width:16.0px;height:1307.5px"><i class="up"></i><i class="thumb" style="top:18.5px;height:948px"></i><i class="down"></i></div>
</section>
</div></div>
<div class="closebtn" role="button" aria-label="Schließen"><svg viewBox="0 0 26 26" aria-hidden="true"><path d="M2.2 2.2L23.8 23.8M23.8 2.2L2.2 23.8" fill="none" stroke="#6b6b6b" stroke-width="3"/></svg></div>
<div class="edge"></div>
</body>
</html>
